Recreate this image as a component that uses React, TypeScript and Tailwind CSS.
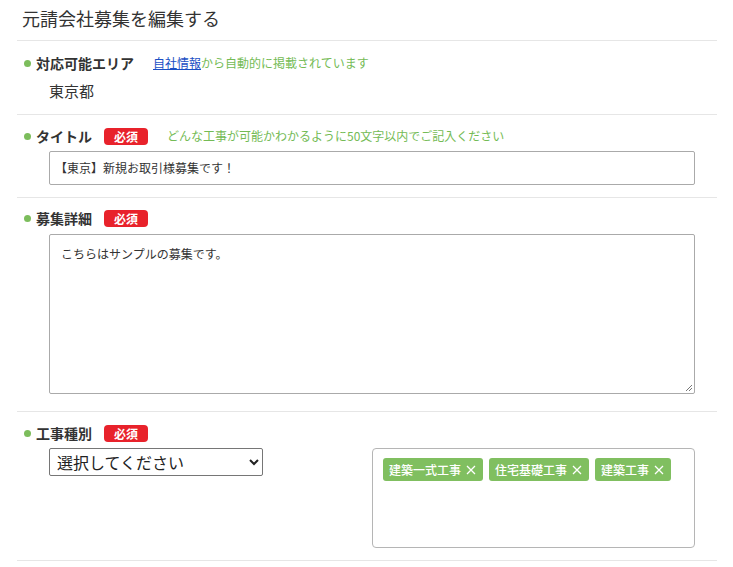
import React from 'react'

const font = { fontFamily: '"Noto Sans CJK JP", "Noto Sans", sans-serif' }

function Label({ text, required, note }: { text: string; required?: boolean; note?: React.ReactNode }) {
  return (
    <div className="flex items-center h-5">
      <span className="ml-[7px] w-[7px] h-[7px] rounded-full bg-[#7cbd5c]" />
      <span className="ml-[5px] text-[14px] font-bold text-[#333] leading-5">{text}</span>
      {required && (
        <span className="ml-[12px] h-[17px] px-[10px] rounded-[4px] bg-[#e8222b] text-white text-[12px] font-bold leading-[17px]">
          必須
        </span>
      )}
      {note && <span className="ml-[19px] text-[12px] text-[#74bb55] leading-5">{note}</span>}
    </div>
  )
}

function Tag({ text }: { text: string }) {
  return (
    <span className="flex items-center h-[23px] pl-[6px] pr-[7px] gap-[5px] rounded-[3px] bg-[#80bf60] text-white text-[12px] font-medium">
      {text}
      <svg width="10" height="10" viewBox="0 0 10 10" className="stroke-white" strokeWidth="1.3">
        <path d="M1 1L9 9M9 1L1 9" />
      </svg>
    </span>
  )
}

export default function App() {
  return (
    <main className="w-[733px] min-h-[567px] bg-white" style={font}>
      <h1 className="px-[22px] pt-[5px] h-[40px] text-[18px] leading-[26px] text-[#333]">元請会社募集を編集する</h1>
      <div className="mx-[17px] w-[700px] border-t border-[#e6e6e6]">
        {/* 対応可能エリア */}
        <section className="pt-[12px] pb-[12px] border-b border-[#e6e6e6]">
          <Label
            text="対応可能エリア"
            note={
              <>
                <a href="#" className="text-[#1a4fc4] underline">自社情報</a>から自動的に掲載されています
              </>
            }
          />
          <p className="mt-[7px] pl-[32px] text-[15px] leading-[22px] text-[#333]">東京都</p>
        </section>

        {/* タイトル */}
        <section className="pt-[11px] pb-[12px] border-b border-[#e6e6e6]">
          <Label text="タイトル" required note="どんな工事が可能かわかるように50文字以内でご記入ください" />
          <div className="mt-[5px] ml-[32px] w-[646px] h-[34px] border border-[#aaa] rounded-[2px] flex items-center px-[5px] text-[12px] text-[#333]">
            【東京】新規お取引様募集です！
          </div>
        </section>

        {/* 募集詳細 */}
        <section className="pt-[10px] pb-[17px] border-b border-[#e6e6e6]">
          <Label text="募集詳細" required />
          <div className="relative mt-[6px] ml-[32px] w-[646px] h-[160px] border border-[#aaa] rounded-[2px] px-[11px] pt-[10px] text-[12px] text-[#333]">
            こちらはサンプルの募集です。
            <svg width="8" height="8" viewBox="0 0 8 8" className="absolute right-[1px] bottom-[1px] stroke-[#777]" strokeWidth="1">
              <path d="M7 1L1 7M7 4L4 7" />
            </svg>
          </div>
        </section>

        {/* 工事種別 */}
        <section className="pt-[11px] pb-[12px] border-b border-[#e6e6e6]">
          <Label text="工事種別" required />
          <div className="mt-[5px] ml-[32px] w-[646px] flex justify-between items-start">
            <select className="w-[214px] h-[28px] border border-[#767676] rounded-[2px] text-[16px] text-[#222] bg-white px-[3px]">
              <option>選択してください</option>
            </select>
            <div className="w-[323px] h-[100px] border border-[#b5b5b5] rounded-[4px] p-[9px] pl-[10px] flex gap-[6px] items-start">
              <Tag text="建築一式工事" />
              <Tag text="住宅基礎工事" />
              <Tag text="建築工事" />
            </div>
          </div>
        </section>
      </div>
    </main>
  )
}
